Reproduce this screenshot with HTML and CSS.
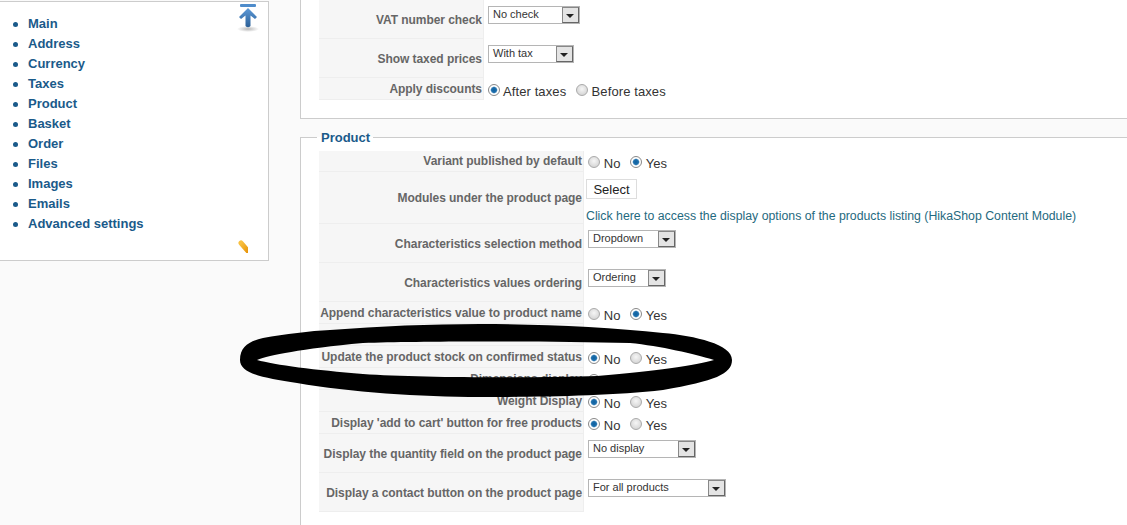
FILE: index.html
```html
<!DOCTYPE html>
<html lang="en">
<head>
    <meta charset="UTF-8">
    <title>HikaShop Configuration</title>
    <link rel="stylesheet" href="styles.css">
</head>
<body>
    <div class="page">
        <aside class="side-menu">
            <svg class="icon-top" width="24" height="32" viewBox="0 0 24 32">
                <defs>
                    <linearGradient id="arrow-blue" x1="0" y1="0" x2="0" y2="1">
                        <stop offset="0" stop-color="#5d9ad8"/>
                        <stop offset="1" stop-color="#2b5f96"/>
                    </linearGradient>
                    <radialGradient id="arrow-shadow">
                        <stop offset="0" stop-color="#999" stop-opacity="0.7"/>
                        <stop offset="1" stop-color="#999" stop-opacity="0"/>
                    </radialGradient>
                    <linearGradient id="check-orange" x1="0" y1="0" x2="1" y2="1">
                        <stop offset="0" stop-color="#f8c040"/>
                        <stop offset="1" stop-color="#e8960c"/>
                    </linearGradient>
                </defs>
                <ellipse cx="12" cy="29" rx="11" ry="3" fill="url(#arrow-shadow)"/>
                <rect x="4" y="4" width="16" height="3" rx="1" fill="#4f8ccb"/>
                <path d="M12 8 L21 17 L19 19 L14.5 15.5 L14.5 26 Q12 28.500 9.500 26 L9.500 15.500 L5 19 L3 17 Z" fill="url(#arrow-blue)"/>
            </svg>
            <ul class="side-list">
                <li><a href="#">Main</a></li>
                <li><a href="#">Address</a></li>
                <li><a href="#">Currency</a></li>
                <li><a href="#">Taxes</a></li>
                <li><a href="#">Product</a></li>
                <li><a href="#">Basket</a></li>
                <li><a href="#">Order</a></li>
                <li><a href="#">Files</a></li>
                <li><a href="#">Images</a></li>
                <li><a href="#">Emails</a></li>
                <li><a href="#">Advanced settings</a></li>
            </ul>
            <svg class="icon-bottom" width="10" height="13" viewBox="0 0 10 13">
                <path d="M3 3 L10 11" stroke="url(#check-orange)" stroke-width="5" stroke-linecap="round" fill="none"/>
            </svg>
        </aside>

        <main class="content">
            <section class="group group-first">
                <table class="options">
                    <tr class="row-select">
                        <td class="key">VAT number check</td>
                        <td class="val"><span class="select w-92"><span>No check</span><i class="drop"></i></span></td>
                    </tr>
                    <tr class="row-select">
                        <td class="key">Show taxed prices</td>
                        <td class="val"><span class="select w-86"><span>With tax</span><i class="drop"></i></span></td>
                    </tr>
                    <tr>
                        <td class="key">Apply discounts</td>
                        <td class="val">
                            <label><input type="radio" name="disc" checked> After taxes</label>
                            <label><input type="radio" name="disc"> Before taxes</label>
                        </td>
                    </tr>
                </table>
            </section>

            <fieldset class="group group-product">
                <legend>Product</legend>
                <table class="options">
                    <tr class="row-first">
                        <td class="key">Variant published by default</td>
                        <td class="val">
                            <label><input type="radio" name="variant"> No</label>
                            <label><input type="radio" name="variant" checked> Yes</label>
                        </td>
                    </tr>
                    <tr class="row-modules">
                        <td class="key">Modules under the product page</td>
                        <td class="val">
                            <button class="btn" type="button">Select</button>
                            <a class="link" href="#">Click here to access the display options of the products listing (HikaShop Content Module)</a>
                        </td>
                    </tr>
                    <tr class="row-select">
                        <td class="key">Characteristics selection method</td>
                        <td class="val"><span class="select w-88"><span>Dropdown</span><i class="drop"></i></span></td>
                    </tr>
                    <tr class="row-select">
                        <td class="key">Characteristics values ordering</td>
                        <td class="val"><span class="select w-78"><span>Ordering</span><i class="drop"></i></span></td>
                    </tr>
                    <tr>
                        <td class="key">Append characteristics value to product name</td>
                        <td class="val">
                            <label><input type="radio" name="append"> No</label>
                            <label><input type="radio" name="append" checked> Yes</label>
                        </td>
                    </tr>
                    <tr>
                        <td class="key">&nbsp;</td>
                        <td class="val">&nbsp;</td>
                    </tr>
                    <tr>
                        <td class="key">Update the product stock on confirmed status</td>
                        <td class="val">
                            <label><input type="radio" name="stock" checked> No</label>
                            <label><input type="radio" name="stock"> Yes</label>
                        </td>
                    </tr>
                    <tr>
                        <td class="key">Dimensions display</td>
                        <td class="val">
                            <label><input type="radio" name="dim" checked> No</label>
                            <label><input type="radio" name="dim"> Yes</label>
                        </td>
                    </tr>
                    <tr>
                        <td class="key">Weight Display</td>
                        <td class="val">
                            <label><input type="radio" name="weight" checked> No</label>
                            <label><input type="radio" name="weight"> Yes</label>
                        </td>
                    </tr>
                    <tr>
                        <td class="key">Display 'add to cart' button for free products</td>
                        <td class="val">
                            <label><input type="radio" name="free" checked> No</label>
                            <label><input type="radio" name="free"> Yes</label>
                        </td>
                    </tr>
                    <tr class="row-select">
                        <td class="key">Display the quantity field on the product page</td>
                        <td class="val"><span class="select w-108"><span>No display</span><i class="drop"></i></span></td>
                    </tr>
                    <tr class="row-select">
                        <td class="key">Display a contact button on the product page</td>
                        <td class="val"><span class="select w-138"><span>For all products</span><i class="drop"></i></span></td>
                    </tr>
                </table>
            </fieldset>
        </main>
    </div>

    <!-- hand drawn marker ring over the page -->
    <svg class="marker" width="500" height="80" viewBox="0 0 500 80">
        <path fill-rule="evenodd" fill="#000" d="M0 36 C0 22 10 17 23 14 C45 10 70 7 90 6 C140 2 190 0 240 0 C300 0 370 3 423 9 C455 12 492 20 492 36 C492 50 475 57 423 66 C370 72 300 73 240 73 C180 73 110 68 57 59 C25 54 0 50 0 36 Z M17 36 C30 31 60 25 123 19 C180 17 300 17 390 19 C420 22 455 30 474 36 C455 41 420 47 357 52 C300 54 180 54 123 50 C75 46 35 41 17 36 Z"/>
    </svg>
</body>
</html>
```

FILE: styles.css
```css
html, body {
    margin: 0;
    padding: 0;
}
body {
    width: 1127px;
    height: 525px;
    overflow: hidden;
    position: relative;
    background-color: #fafafa;
    font-family: "Liberation Sans", Arial, sans-serif;
    font-size: 13px;
    color: #333;
}
.page {
    display: flex;
    align-items: flex-start;
    gap: 31px;
}

/* side menu */
.side-menu {
    position: relative;
    box-sizing: border-box;
    width: 269px;
    height: 260px;
    margin-top: 1px;
    background-color: #fff;
    border: 1px solid #ccc;
    border-left: none;
}
.side-list {
    list-style: none;
    margin: 0;
    padding: 12px 0 0 28px;
}
.side-list li {
    position: relative;
    height: 20px;
    line-height: 20px;
}
.side-list li::before {
    content: "";
    position: absolute;
    left: -15px;
    top: 8px;
    width: 5px;
    height: 5px;
    border-radius: 50%;
    background-color: #1a5a8a;
}
.side-list a {
    color: #1a5a8a;
    font-size: 13px;
    font-weight: bold;
    text-decoration: none;
}
.icon-top {
    position: absolute;
    left: 236px;
    top: -2px;
}
.icon-bottom {
    position: absolute;
    left: 238px;
    top: 238px;
}

/* right column */
.content {
    flex: 1;
}
.group {
    display: block;
    box-sizing: border-box;
    min-width: 0;
    margin: 0;
    padding: 0 0 0 18px;
    background-color: #fff;
    border: 1px solid #ccc;
    border-right: none;
}
.group-first {
    height: 119px;
    border-top: none;
    margin-bottom: 9px;
}
.group-first .key {
    width: 165px;
}
.group-product {
    padding-bottom: 13px;
    border-bottom: none;
}
.group legend {
    margin-left: -2px;
    padding: 2px 3px 0 4px;
    color: #1a5a8a;
    font-size: 13px;
    font-weight: bold;
    line-height: 16px;
}
.options {
    border-collapse: separate;
    border-spacing: 0;
}
fieldset .options {
    margin-top: 5px;
}
.options td {
    box-sizing: border-box;
    height: 22px;
    padding: 0;
    border-bottom: 1px solid #eee;
}
.options .key {
    padding: 0 1px 0 0;
    background-color: #f6f6f6;
    border-right: 1px solid #eee;
    color: #666;
    font-size: 12px;
    font-weight: bold;
    letter-spacing: -0.05px;
    text-align: right;
    white-space: nowrap;
}
fieldset .options .key {
    width: 265px;
}
.options .val {
    padding: 0 0 0 4px;
    border-bottom: none;
    white-space: nowrap;
}
.row-first td {
    height: 21px;
}
.row-select td {
    height: 39px;
}
.row-select .key {
    padding-top: 2px;
}
.row-select .val {
    vertical-align: top;
    padding-top: 6px;
}
.row-modules td {
    height: 52px;
}
.row-modules .val {
    vertical-align: top;
    padding-top: 7px;
}

.val label {
    display: inline-block;
    margin-right: 6px;
    padding-top: 5px;
    font-size: 13px;
    letter-spacing: 0.1px;
}
.row-first .val label {
    padding-top: 3px;
}
input[type="radio"] {
    appearance: none;
    box-sizing: border-box;
    width: 12px;
    height: 12px;
    margin: 0;
    vertical-align: 0;
    border: 1px solid #aaa;
    border-radius: 50%;
    background: radial-gradient(circle at 50% 40%, #f6f6f6, #ccc);
}
input[type="radio"]:checked {
    border-color: #888;
    background: radial-gradient(circle, #0e5f9e 0, #1f70ad 2.5px, #fff 3.8px);
}

/* flat select look */
.select {
    display: flex;
    align-items: center;
    justify-content: space-between;
    box-sizing: border-box;
    height: 18px;
    padding-left: 4px;
    border: 1px solid #b5b5b5;
    background-color: #fff;
    color: #333;
    font-size: 11px;
}
.select > span {
    padding-bottom: 2px;
}
.w-92 { width: 92px; }
.w-86 { width: 86px; }
.w-88 { width: 88px; }
.w-78 { width: 78px; }
.w-108 { width: 108px; }
.w-138 { width: 138px; }
.drop {
    position: relative;
    box-sizing: border-box;
    width: 17px;
    height: 16px;
    border: 1px solid #666;
    border-top-color: #888;
    border-left-color: #888;
    background-color: #e4e4e4;
}
.drop::after {
    content: "";
    position: absolute;
    left: 3px;
    top: 6px;
    border-style: solid;
    border-width: 4px 4px 0;
    border-color: #222 transparent transparent;
}
.btn {
    display: block;
    box-sizing: border-box;
    width: 51px;
    height: 20px;
    margin-left: -2px;
    padding: 0;
    border: 1px solid #ddd;
    background-color: #fff;
    color: #222;
    font-family: inherit;
    font-size: 13px;
}
.link {
    display: block;
    margin: 10px 0 0 -2px;
    color: #1f6a80;
    font-size: 12.3px;
    text-decoration: none;
}

/* marker ring */
.marker {
    position: absolute;
    left: 240px;
    top: 324px;
}
```
